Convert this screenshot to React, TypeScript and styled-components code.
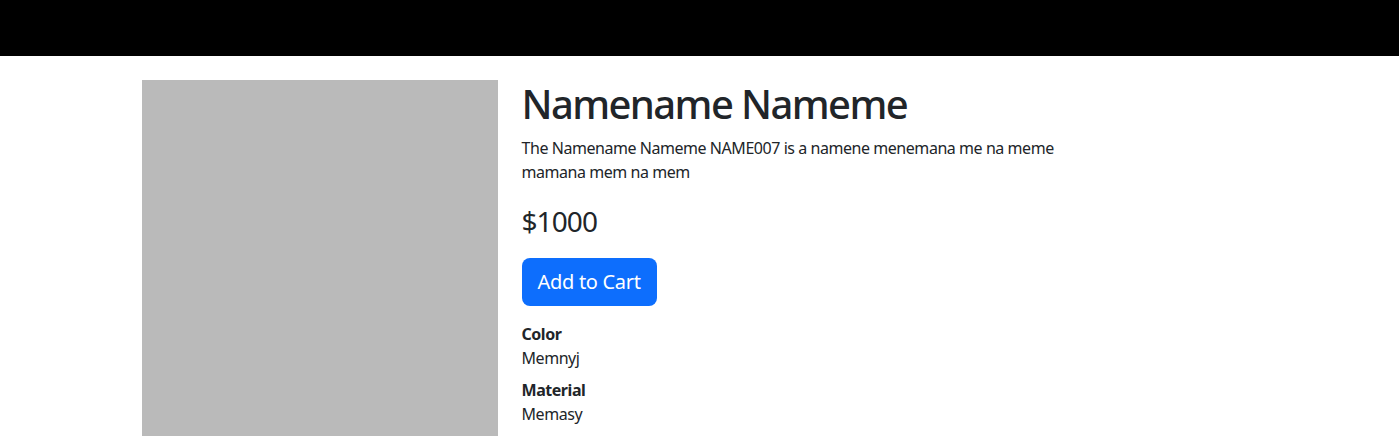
import React from "react";
import styled, { createGlobalStyle } from "styled-components";

const Global = createGlobalStyle`
  *, *::before, *::after { box-sizing: border-box; }
  body {
    margin: 0;
    font-family: "Noto Sans", "Open Sans", sans-serif;
    font-size: 16px;
    line-height: 1.5;
    letter-spacing: -0.45px;
    color: #212529;
    background: #fff;
  }
`;

const Header = styled.header`
  height: 56px;
  background: #000;
`;

const Container = styled.main`
  max-width: 1140px;
  margin: 0 auto;
  padding: 0 12px;
`;

const Row = styled.div`
  display: grid;
  grid-template-columns: 356px 546px;
  column-gap: 24px;
  margin-top: 24px;
`;

const Photo = styled.div`
  width: 356px;
  height: 356px;
  background: #bababa;
`;

const Info = styled.div`
  display: flex;
  flex-direction: column;
  align-items: flex-start;
`;

const Title = styled.h1`
  margin: 0 0 8px;
  font-size: 40px;
  font-weight: 500;
  line-height: 1.2;
  letter-spacing: -1.6px;
`;

const Description = styled.p`
  margin: 0 0 16px;
`;

const Price = styled.p`
  margin: 0 0 16px;
  font-size: 28px;
  line-height: 1.5;
  letter-spacing: -0.9px;
`;

const CartButton = styled.button`
  height: 48px;
  padding: 0 16px;
  margin-bottom: 16px;
  border: none;
  border-radius: 8px;
  background: #0d6efd;
  color: #fff;
  font-family: inherit;
  font-size: 20px;
  line-height: 1.5;
  letter-spacing: -0.3px;
  cursor: pointer;
`;

const Specs = styled.dl`
  margin: 0;
`;

const Term = styled.dt`
  font-weight: 700;
`;

const Value = styled.dd`
  margin: 0 0 8px;
`;

const specs = [
  { label: "Color", value: "Memnyj" },
  { label: "Material", value: "Memasy" },
];

export default function App() {
  return (
    <>
      <Global />
      <Header />
      <Container>
        <Row>
          <Photo />
          <Info>
            <Title>Namename Nameme</Title>
            <Description>
              The Namename Nameme NAME007 is a namene menemana me na meme
              mamana mem na mem
            </Description>
            <Price>$1000</Price>
            <CartButton>Add to Cart</CartButton>
            <Specs>
              {specs.map((s) => (
                <React.Fragment key={s.label}>
                  <Term>{s.label}</Term>
                  <Value>{s.value}</Value>
                </React.Fragment>
              ))}
            </Specs>
          </Info>
        </Row>
      </Container>
    </>
  );
}
